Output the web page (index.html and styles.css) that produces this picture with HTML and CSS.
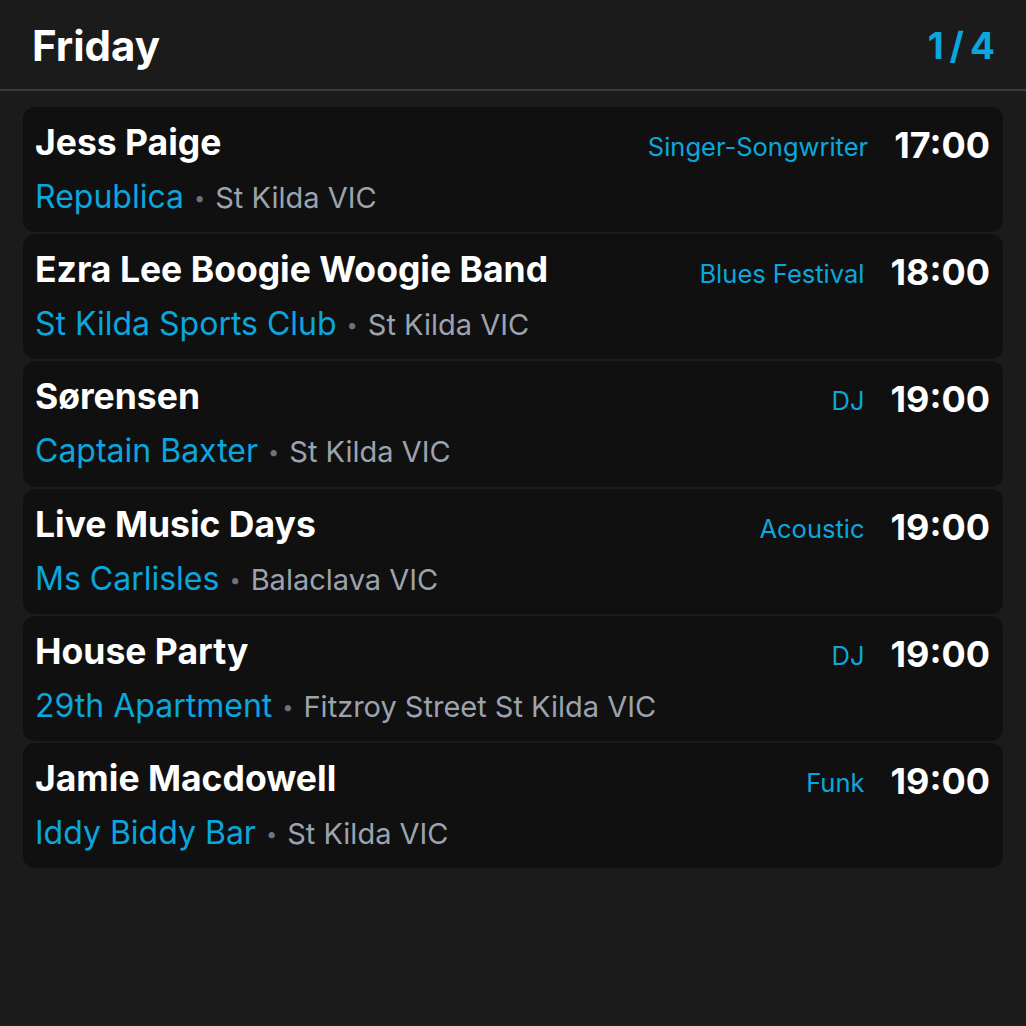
FILE: index.html
```html
<!DOCTYPE html>
<html lang="en">
<head>
<meta charset="utf-8">
<title>Friday</title>
<link rel="stylesheet" href="styles.css">
</head>
<body>
<header class="header">
  <h1 class="day">Friday</h1>
  <div class="counter">1<span class="slash">/</span>4</div>
</header>
<main class="list">
  <div class="card">
    <div class="row-top">
      <div class="title">Jess Paige</div>
      <div class="tag">Singer-Songwriter</div>
      <div class="time">17:00</div>
    </div>
    <div class="row-sub"><span class="venue">Republica</span><span class="dot">•</span><span class="loc">St Kilda VIC</span></div>
  </div>
  <div class="card">
    <div class="row-top">
      <div class="title">Ezra Lee Boogie Woogie Band</div>
      <div class="tag">Blues Festival</div>
      <div class="time">18:00</div>
    </div>
    <div class="row-sub"><span class="venue">St Kilda Sports Club</span><span class="dot">•</span><span class="loc">St Kilda VIC</span></div>
  </div>
  <div class="card">
    <div class="row-top">
      <div class="title">Sørensen</div>
      <div class="tag">DJ</div>
      <div class="time">19:00</div>
    </div>
    <div class="row-sub"><span class="venue">Captain Baxter</span><span class="dot">•</span><span class="loc">St Kilda VIC</span></div>
  </div>
  <div class="card">
    <div class="row-top">
      <div class="title">Live Music Days</div>
      <div class="tag">Acoustic</div>
      <div class="time">19:00</div>
    </div>
    <div class="row-sub"><span class="venue">Ms Carlisles</span><span class="dot">•</span><span class="loc">Balaclava VIC</span></div>
  </div>
  <div class="card">
    <div class="row-top">
      <div class="title">House Party</div>
      <div class="tag">DJ</div>
      <div class="time">19:00</div>
    </div>
    <div class="row-sub"><span class="venue">29th Apartment</span><span class="dot">•</span><span class="loc">Fitzroy Street St Kilda VIC</span></div>
  </div>
  <div class="card">
    <div class="row-top">
      <div class="title">Jamie Macdowell</div>
      <div class="tag">Funk</div>
      <div class="time">19:00</div>
    </div>
    <div class="row-sub"><span class="venue">Iddy Biddy Bar</span><span class="dot">•</span><span class="loc">St Kilda VIC</span></div>
  </div>
</main>
</body>
</html>
```

FILE: styles.css
```css
html, body {
  margin: 0;
  padding: 0;
  background: #1b1b1b;
  font-family: Inter, "Noto Sans", sans-serif;
  color: #ffffff;
}

.header {
  display: flex;
  align-items: center;
  justify-content: space-between;
  height: 91px;
  padding: 3px 31px 0 32px;
  border-bottom: 2px solid #363b44;
  box-sizing: border-box;
}

.day {
  margin: 0;
  font-size: 42px;
  font-weight: 700;
  line-height: 48px;
}

.counter {
  font-size: 37px;
  font-weight: 700;
  color: #0aa6de;
  line-height: 48px;
}

.slash {
  margin: 0 6px;
}

.list {
  display: flex;
  flex-direction: column;
  gap: 2px;
  padding: 16px 23px 0 23px;
}

.card {
  background: #101010;
  border-radius: 12px;
  padding: 16px 13px 0 12px;
  height: 125.2px;
  box-sizing: border-box;
}

.row-top {
  display: flex;
  align-items: flex-start;
}

.title {
  flex: 1;
  font-size: 35.5px;
  font-weight: 700;
  line-height: 40px;
}

.tag {
  font-size: 25.5px;
  color: #0aa6de;
  margin-right: 26px;
  margin-top: 8px;
}

.time {
  font-size: 36px;
  font-weight: 700;
  line-height: 40px;
  margin-top: 2px;
}

.row-sub {
  margin-top: 13px;
  font-size: 32px;
  line-height: 38px;
}

.venue {
  color: #0aa6de;
}

.dot {
  color: #6b7280;
  font-size: 20px;
  margin: 0 10px;
  vertical-align: 3px;
}

.loc {
  color: #9ca3af;
  font-size: 29px;
}
```
